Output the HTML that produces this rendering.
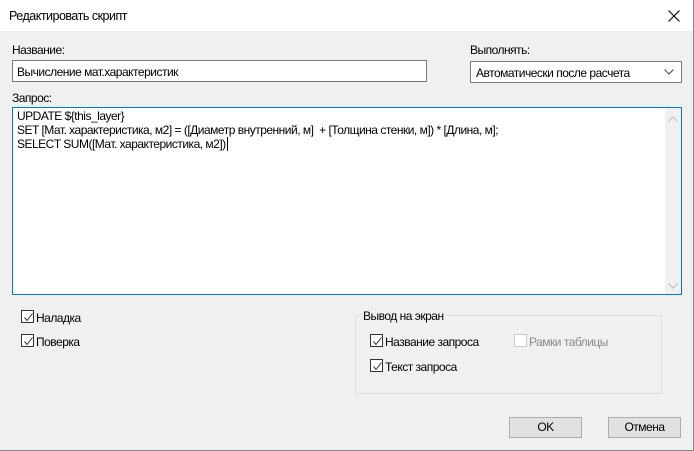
<!DOCTYPE html>
<html><head><meta charset="utf-8"><style>
*{margin:0;padding:0;box-sizing:border-box}
body{width:694px;height:451px;overflow:hidden;background:#f0f0f0;font-family:"Liberation Sans",sans-serif;font-size:12px;color:#000;position:relative;letter-spacing:-0.5px}
.a{position:absolute;white-space:nowrap}
.title{left:0;top:0;width:694px;height:31px;background:#fff}
.frame{left:0;top:0;width:694px;height:451px;border-right:1px solid #888;border-bottom:1px solid #888}
.box{background:#fff;border:1px solid #7a7a7a}
.cb{width:13px;height:13px;border:1px solid #333;background:#fff}
.cb svg{position:absolute;left:1px;top:1px}
.btn{background:#e1e1e1;border:1px solid #adadad;text-align:center;line-height:19px}
</style></head><body>
<div class="a title"></div>
<div class="a" style="left:9px;top:9px;font-size:12.5px">Редактировать скрипт</div>
<svg class="a" style="left:668px;top:10px" width="12" height="12"><path d="M0.5 0.5L11.5 11.5M11.5 0.5L0.5 11.5" stroke="#000" stroke-width="1.1"/></svg>

<div class="a" style="left:12px;top:43px">Название:</div>
<div class="a box" style="left:12px;top:60px;width:415px;height:22px"></div>
<div class="a" style="left:17px;top:65px">Вычисление мат.характеристик</div>

<div class="a" style="left:470px;top:43px">Выполнять:</div>
<div class="a box" style="left:470px;top:61px;width:212px;height:22px"></div>
<div class="a" style="left:476px;top:66px">Автоматически после расчета</div>
<svg class="a" style="left:664px;top:69px" width="10" height="6"><path d="M0.5 0.5L5 5L9.5 0.5" stroke="#444" fill="none"/></svg>

<div class="a" style="left:12px;top:91px">Запрос:</div>
<div class="a" style="left:12px;top:107px;width:670px;height:188px;background:#fff;border:1px solid #0078d7"></div>
<div class="a" style="left:665px;top:108px;width:16px;height:186px;background:#f0f0f0"></div>
<svg class="a" style="left:668px;top:116px" width="10" height="6"><path d="M0.5 5.5L5 1L9.5 5.5" stroke="#bbb" fill="none"/></svg>
<svg class="a" style="left:668px;top:283px" width="10" height="6"><path d="M0.5 0.5L5 5L9.5 0.5" stroke="#bbb" fill="none"/></svg>
<div class="a" style="left:17px;top:109px;line-height:14px">UPDATE ${this_layer}<br>SET [Мат. характеристика, м2] = ([Диаметр внутренний, м] &nbsp;+ [Толщина стенки, м]) * [Длина, м];<br>SELECT SUM([Мат. характеристика, м2])<span style="border-left:1px solid #000;margin-left:1px"></span></div>

<div class="a cb" style="left:21px;top:310px"><svg width="11" height="11"><path d="M1.5 5.5L4 8.5L9.5 1.5" stroke="#333" fill="none"/></svg></div>
<div class="a" style="left:36px;top:311px">Наладка</div>
<div class="a cb" style="left:21px;top:334px"><svg width="11" height="11"><path d="M1.5 5.5L4 8.5L9.5 1.5" stroke="#333" fill="none"/></svg></div>
<div class="a" style="left:36px;top:335px">Поверка</div>

<div class="a" style="left:355px;top:315px;width:307px;height:79px;border:1px solid #dcdcdc"></div>
<div class="a" style="left:361px;top:309px;background:#f0f0f0;padding:0 2px">Вывод на экран</div>
<div class="a cb" style="left:370px;top:334px"><svg width="11" height="11"><path d="M1.5 5.5L4 8.5L9.5 1.5" stroke="#333" fill="none"/></svg></div>
<div class="a" style="left:385px;top:335px">Название запроса</div>
<div class="a cb" style="left:514px;top:334px;border-color:#ccc"></div>
<div class="a" style="left:529px;top:335px;color:#8a8a8a">Рамки таблицы</div>
<div class="a cb" style="left:370px;top:359px"><svg width="11" height="11"><path d="M1.5 5.5L4 8.5L9.5 1.5" stroke="#333" fill="none"/></svg></div>
<div class="a" style="left:385px;top:360px">Текст запроса</div>

<div class="a btn" style="left:509px;top:417px;width:73px;height:21px">OK</div>
<div class="a btn" style="left:608px;top:417px;width:73px;height:21px">Отмена</div>
<div class="a frame"></div>
</body></html>
